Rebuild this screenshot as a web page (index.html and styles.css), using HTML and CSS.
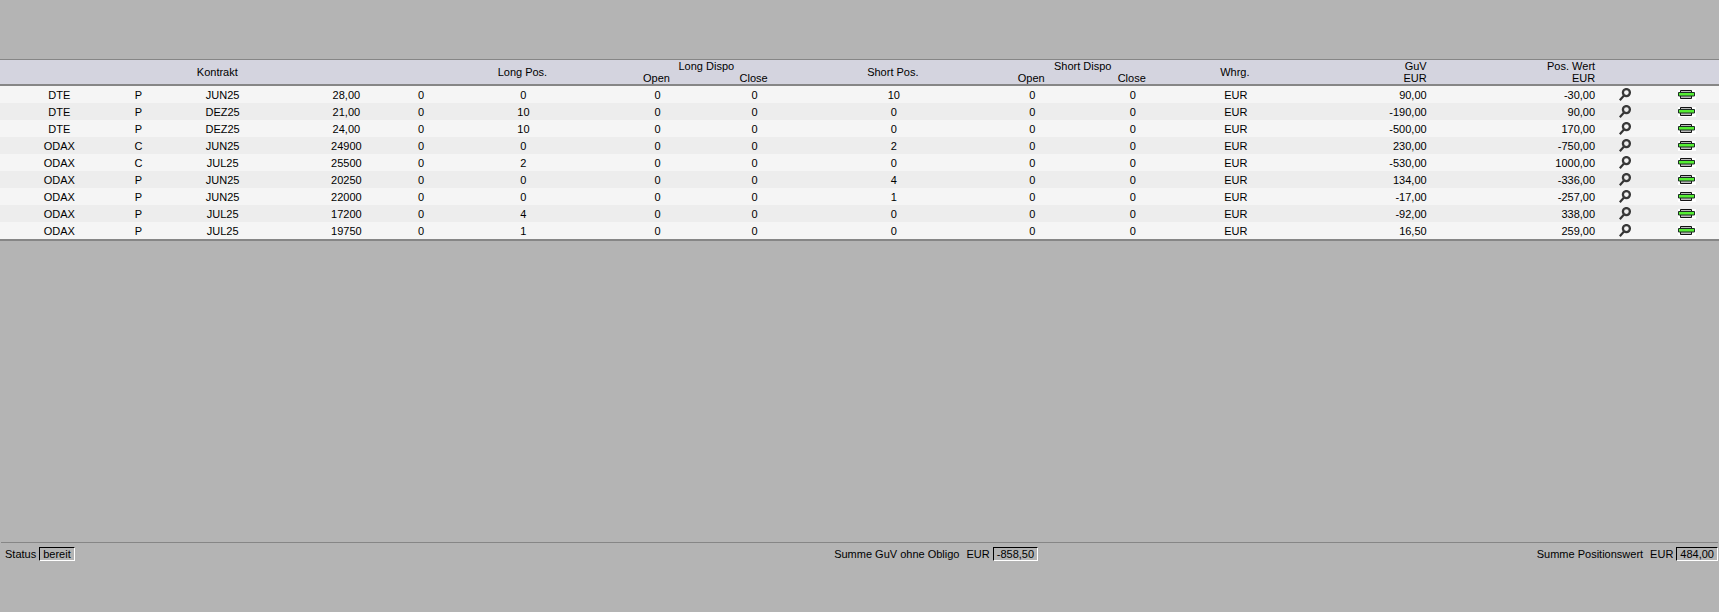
FILE: index.html
```
<!DOCTYPE html>
<html lang="de">
<head>
	<meta charset="UTF-8">
	<title>Positionen</title>
	<link rel="stylesheet" href="styles.css">
</head>
<body>
	<svg class="defs" aria-hidden="true">
		<symbol id="lupe" viewBox="0 0 13 13">
			<path d="M4.8 7.8L.8 12.2" fill="none" stroke="#333" stroke-width="2.2"/>
			<circle cx="7.4" cy="4.6" r="3.5" fill="none" stroke="#383838" stroke-width="2.3"/>
		</symbol>
		<symbol id="drucker" viewBox="0 0 18 10">
			<path d="M0 0H18V10H0Z" fill="#fff"/>
			<path d="M2.5 .5H13.5V8.5H2.5Z" fill="#bbb" stroke="#111"/>
			<path d="M.5 2.5H16.5V6H.5Z" fill="#55ee33" stroke="#1c2c24"/>
		</symbol>
	</svg>
	<main>
		<table class="pos">
			<colgroup>
				<col class="c-prod"><col class="c-typ"><col class="c-monat"><col class="c-basis"><col class="c-vers">
				<col class="c-long"><col class="c-lopen"><col class="c-lclose">
				<col class="c-short"><col class="c-sopen"><col class="c-sclose">
				<col class="c-whrg"><col class="c-guv"><col class="c-wert"><col class="c-info"><col class="c-druck">
			</colgroup>
			<thead>
				<tr>
					<th colspan="5" rowspan="2">Kontrakt</th>
					<th rowspan="2">Long Pos.</th>
					<th colspan="2">Long Dispo</th>
					<th rowspan="2">Short Pos.</th>
					<th colspan="2">Short Dispo</th>
					<th rowspan="2">Whrg.</th>
					<th rowspan="2" class="num">GuV<br>EUR</th>
					<th rowspan="2" class="num">Pos. Wert<br>EUR</th>
					<th rowspan="2"></th>
					<th rowspan="2"></th>
				</tr>
				<tr>
					<th>Open</th>
					<th>Close</th>
					<th>Open</th>
					<th>Close</th>
				</tr>
			</thead>
			<tbody>
				<tr><td>DTE</td><td>P</td><td>JUN25</td><td>28,00</td><td>0</td><td>0</td><td>0</td><td>0</td><td>10</td><td>0</td><td>0</td><td>EUR</td><td class="num">90,00</td><td class="num">-30,00</td>
					<td><a href="#" aria-label="Details"><svg class="lupe"><use href="#lupe"/></svg></a></td><td><a href="#" aria-label="Drucken"><svg class="drucker"><use href="#drucker"/></svg></a></td></tr>
				<tr><td>DTE</td><td>P</td><td>DEZ25</td><td>21,00</td><td>0</td><td>10</td><td>0</td><td>0</td><td>0</td><td>0</td><td>0</td><td>EUR</td><td class="num">-190,00</td><td class="num">90,00</td>
					<td><a href="#" aria-label="Details"><svg class="lupe"><use href="#lupe"/></svg></a></td><td><a href="#" aria-label="Drucken"><svg class="drucker"><use href="#drucker"/></svg></a></td></tr>
				<tr><td>DTE</td><td>P</td><td>DEZ25</td><td>24,00</td><td>0</td><td>10</td><td>0</td><td>0</td><td>0</td><td>0</td><td>0</td><td>EUR</td><td class="num">-500,00</td><td class="num">170,00</td>
					<td><a href="#" aria-label="Details"><svg class="lupe"><use href="#lupe"/></svg></a></td><td><a href="#" aria-label="Drucken"><svg class="drucker"><use href="#drucker"/></svg></a></td></tr>
				<tr><td>ODAX</td><td>C</td><td>JUN25</td><td>24900</td><td>0</td><td>0</td><td>0</td><td>0</td><td>2</td><td>0</td><td>0</td><td>EUR</td><td class="num">230,00</td><td class="num">-750,00</td>
					<td><a href="#" aria-label="Details"><svg class="lupe"><use href="#lupe"/></svg></a></td><td><a href="#" aria-label="Drucken"><svg class="drucker"><use href="#drucker"/></svg></a></td></tr>
				<tr><td>ODAX</td><td>C</td><td>JUL25</td><td>25500</td><td>0</td><td>2</td><td>0</td><td>0</td><td>0</td><td>0</td><td>0</td><td>EUR</td><td class="num">-530,00</td><td class="num">1000,00</td>
					<td><a href="#" aria-label="Details"><svg class="lupe"><use href="#lupe"/></svg></a></td><td><a href="#" aria-label="Drucken"><svg class="drucker"><use href="#drucker"/></svg></a></td></tr>
				<tr><td>ODAX</td><td>P</td><td>JUN25</td><td>20250</td><td>0</td><td>0</td><td>0</td><td>0</td><td>4</td><td>0</td><td>0</td><td>EUR</td><td class="num">134,00</td><td class="num">-336,00</td>
					<td><a href="#" aria-label="Details"><svg class="lupe"><use href="#lupe"/></svg></a></td><td><a href="#" aria-label="Drucken"><svg class="drucker"><use href="#drucker"/></svg></a></td></tr>
				<tr><td>ODAX</td><td>P</td><td>JUN25</td><td>22000</td><td>0</td><td>0</td><td>0</td><td>0</td><td>1</td><td>0</td><td>0</td><td>EUR</td><td class="num">-17,00</td><td class="num">-257,00</td>
					<td><a href="#" aria-label="Details"><svg class="lupe"><use href="#lupe"/></svg></a></td><td><a href="#" aria-label="Drucken"><svg class="drucker"><use href="#drucker"/></svg></a></td></tr>
				<tr><td>ODAX</td><td>P</td><td>JUL25</td><td>17200</td><td>0</td><td>4</td><td>0</td><td>0</td><td>0</td><td>0</td><td>0</td><td>EUR</td><td class="num">-92,00</td><td class="num">338,00</td>
					<td><a href="#" aria-label="Details"><svg class="lupe"><use href="#lupe"/></svg></a></td><td><a href="#" aria-label="Drucken"><svg class="drucker"><use href="#drucker"/></svg></a></td></tr>
				<tr><td>ODAX</td><td>P</td><td>JUL25</td><td>19750</td><td>0</td><td>1</td><td>0</td><td>0</td><td>0</td><td>0</td><td>0</td><td>EUR</td><td class="num">16,50</td><td class="num">259,00</td>
					<td><a href="#" aria-label="Details"><svg class="lupe"><use href="#lupe"/></svg></a></td><td><a href="#" aria-label="Drucken"><svg class="drucker"><use href="#drucker"/></svg></a></td></tr>
			</tbody>
		</table>
	</main>
	<footer class="bar">
		<div class="grp">Status <output class="box">bereit</output></div>
		<div class="grp sum"><span class="lbl">Summe GuV ohne Obligo</span>EUR <output class="box">-858,50</output></div>
		<div class="grp sum"><span class="lbl">Summe Positionswert</span>EUR <output class="box">484,00</output></div>
	</footer>
</body>
</html>
```
FILE: styles.css
```
* { box-sizing: border-box; }
body { margin: 0; min-height: 100vh; display: flex; flex-direction: column;
	background: #B4B4B4; color: #000; font: 11px/12px Arial, "Liberation Sans", sans-serif; }
main { flex: 1; padding-top: 59px; }
.defs { display: none; }

.pos { width: 100%; table-layout: fixed; border-collapse: separate; border-spacing: 0;
	border-top: 1px solid #868686; border-bottom: 2px solid #868686; }
.pos th { height: 12px; padding: 0 2px 0 0; background: #D4D4DF; font-weight: normal; text-align: center; }
.pos th[rowspan] { border-bottom: 2px solid #868686; }
.pos tr + tr th { height: 14px; border-bottom: 2px solid #868686; }
.pos td { height: 17px; padding: 2px 0 0; line-height: 15px; text-align: center; white-space: nowrap; }
.pos th.num { padding: 0; }
.pos .num { text-align: right; }
.pos tbody tr { background: #F5F5F5; }
.pos tbody tr:nth-child(even) { background: #EDEDED; }
.pos a { display: block; height: 15px; }
.pos svg { display: block; margin: 0 auto; }
.lupe { width: 13px; height: 13px; }
.drucker { width: 18px; height: 14px; }

/* column widths */
.c-prod { width: 6.9%; }
.c-typ { width: 2.3%; }
.c-monat { width: 7.5%; }
.c-basis { width: 6.9%; }
.c-vers { width: 1.8%; }
.c-long { width: 10.1%; }
.c-lopen { width: 5.5%; }
.c-lclose { width: 5.8%; }
.c-short { width: 10.4%; }
.c-sopen { width: 5.7%; }
.c-sclose { width: 6%; }
.c-whrg { width: 6%; }
.c-guv { width: 8.1%; }
.c-wert { width: 9.8%; }
.c-info { width: 3.5%; }
.c-druck { width: 3.7%; }

.bar { display: grid; grid-template-columns: 20% 40.4% 1fr; align-items: start; height: 70px;
	margin: 0 1px; padding-top: 4px; border-top: 1px solid #868686; }
.grp { display: flex; align-items: center; gap: 3px; padding-left: 4px; white-space: nowrap; }
.sum { justify-content: flex-end; }
.lbl { margin-right: 4px; }
.box { padding: 0 3px; border: 1px solid; border-color: #000 #FFF #FFF #000; }
```
